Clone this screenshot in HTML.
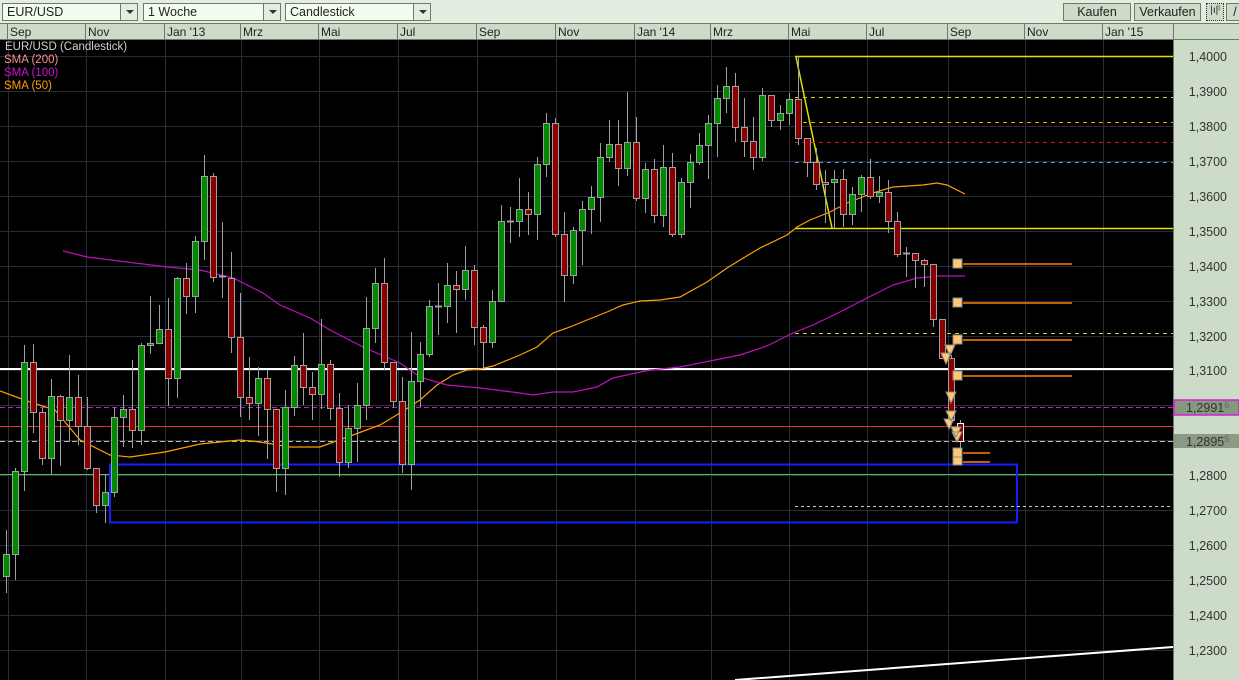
<!DOCTYPE html>
<html><head><meta charset="utf-8">
<style>
*{margin:0;padding:0;box-sizing:border-box}
body{width:1239px;height:680px;overflow:hidden;background:#e4eee0;font-family:"Liberation Sans",sans-serif;position:relative}
.dd{position:absolute;top:3px;height:18px;background:#f2fdf0;border:1px solid #6f7a6b;font-size:12.5px;color:#222;padding:1px 0 0 4px}
.dd .ar{position:absolute;right:0;top:0;width:17px;height:16px;border-left:1px solid #6f7a6b;background:#e4eee0}
.dd .ar:after{content:"";position:absolute;left:5px;top:6px;border-left:4px solid transparent;border-right:4px solid transparent;border-top:4px solid #333}
.btn{position:absolute;top:3px;height:18px;background:#cddcc8;border:1px solid #6f7a6b;font-size:12.5px;color:#222;text-align:center;padding-top:1px}
</style></head><body>
<div class="dd" style="left:2px;width:136px">EUR/USD<div class="ar"></div></div>
<div class="dd" style="left:143px;width:138px">1 Woche<div class="ar"></div></div>
<div class="dd" style="left:285px;width:146px">Candlestick<div class="ar"></div></div>
<div class="btn" style="left:1063px;width:68px">Kaufen</div>
<div class="btn" style="left:1134px;width:67px">Verkaufen</div>
<div class="btn" style="left:1206px;width:18px;border:1px dotted #333;font-size:10px">|ı|ˡ</div>
<div class="btn" style="left:1226px;width:18px">/</div>
<svg id="s" width="1239" height="680" style="position:absolute;left:0;top:0" xmlns="http://www.w3.org/2000/svg" font-family="Liberation Sans, sans-serif">
<rect x="0" y="23" width="1239" height="17" fill="#cddcc8"/>
<line x1="0" y1="23.5" x2="1239" y2="23.5" stroke="#6f7a6b"/>
<line x1="0" y1="39.5" x2="1239" y2="39.5" stroke="#6f7a6b"/>
<rect x="0" y="40" width="1173" height="640" fill="#000"/>
<rect x="1173" y="40" width="66" height="640" fill="#cddcc8"/>
<line x1="1173.5" y1="23" x2="1173.5" y2="680" stroke="#6f7a6b"/>
<g id="grid" stroke="#262c3a" stroke-width="1"></g>
<g id="hdr" font-size="12" fill="#222"></g>
<g id="ax" font-size="12.5" fill="#333" text-anchor="end"></g>
<!-- horizontal levels -->
<line x1="0" y1="369" x2="1173" y2="369" stroke="#fff" stroke-width="2"/>
<line x1="0" y1="407.5" x2="1173" y2="407.5" stroke="#c020c0" stroke-dasharray="5,3"/>
<line x1="0" y1="426.5" x2="1173" y2="426.5" stroke="#e03030"/>
<line x1="0" y1="441.5" x2="1173" y2="441.5" stroke="#bbb" stroke-dasharray="5,3"/>
<line x1="0" y1="474.5" x2="1173" y2="474.5" stroke="#50c050"/>
<rect x="110" y="464.5" width="907" height="58" fill="none" stroke="#1020ff" stroke-width="2"/>
<line x1="795" y1="56.5" x2="1173" y2="56.5" stroke="#e0e000" stroke-width="1.5"/>
<line x1="795" y1="228.5" x2="1173" y2="228.5" stroke="#e0e000" stroke-width="1.5"/>
<line x1="796" y1="57" x2="832" y2="228" stroke="#e0e000" stroke-width="1.5"/>
<line x1="795" y1="97.5" x2="1173" y2="97.5" stroke="#d8d040" stroke-dasharray="4,4"/>
<line x1="795" y1="122.5" x2="1173" y2="122.5" stroke="#ff9900" stroke-dasharray="4,4"/>
<line x1="795" y1="142.5" x2="1173" y2="142.5" stroke="#e02020" stroke-dasharray="4,4"/>
<line x1="795" y1="162.5" x2="1173" y2="162.5" stroke="#6090e0" stroke-dasharray="4,4"/>
<line x1="795" y1="333.5" x2="1173" y2="333.5" stroke="#d8d040" stroke-dasharray="4,4"/>
<line x1="795" y1="506.5" x2="1173" y2="506.5" stroke="#ccc" stroke-dasharray="3,3"/>
<line x1="735" y1="680" x2="1173" y2="647" stroke="#fff" stroke-width="2"/>
<polyline fill="none" stroke="#ffa000" stroke-width="1.2" points="0,391 30,402 55,410 80,440 110,455 130,457 165,452 200,444 240,440 260,442 290,447 320,447 353,435 380,425 400,413 420,400 437,385 453,375 467,370 480,369 493,366 520,355 537,347 553,333 570,327 587,320 607,312 623,305 640,301 660,300 680,297 707,282 727,268 740,260 760,248 787,235 797,227 810,220 830,212 847,203 873,193 893,187 923,185 937,183 947,185 965,194"/>
<polyline fill="none" stroke="#c010c0" stroke-width="1.2" points="63,251 87,257 127,262 167,267 200,270 233,278 263,293 280,305 310,318 330,330 363,347 400,363 420,377 447,385 480,388 520,393 533,395 553,392 573,392 597,387 613,378 650,370 680,367 740,355 767,346 793,333 813,325 840,312 867,298 893,285 917,278 940,276 965,276"/>
<g id="c"></g>
<g stroke="#ff8000" stroke-width="1.5">
<line x1="963" y1="264" x2="1072" y2="264"/><line x1="963" y1="303" x2="1072" y2="303"/>
<line x1="963" y1="340" x2="1072" y2="340"/><line x1="963" y1="376" x2="1072" y2="376"/>
<line x1="963" y1="453" x2="990" y2="453"/><line x1="963" y1="462" x2="990" y2="462"/>
</g>
<g fill="#ffc878" stroke="#888">
<rect x="953" y="259" width="9" height="9"/><rect x="953" y="298" width="9" height="9"/>
<rect x="953" y="335" width="9" height="9"/><rect x="953" y="371" width="9" height="9"/>
<rect x="953" y="448" width="9" height="9"/><rect x="953" y="457" width="9" height="8"/>
<path d="M945,345h10l-5,11z M941,353h10l-5,11z M946,392h10l-5,11z M946,411h10l-5,10z M944,419h10l-5,10z M951,427h10l-5,10z M952,432h10l-5,10z"/>
</g>
<rect x="1174" y="400" width="65" height="15" fill="#879880" stroke="#d020d0" stroke-width="1.5"/>
<text x="1186" y="412" font-size="12.5" fill="#333">1,2991<tspan font-size="9" fill="#666" dy="-4">6</tspan></text>
<rect x="1174" y="434" width="65" height="14" fill="#8a9a85"/>
<text x="1186" y="446" font-size="12.5" fill="#333">1,2895<tspan font-size="9" fill="#666" dy="-4">5</tspan></text>
<text x="5" y="50" font-size="11.5" fill="#d0d0d0">EUR/USD (Candlestick)</text>
<text x="4" y="63" font-size="11.5" fill="#ff9090">SMA (200)</text>
<text x="4" y="76" font-size="11.5" fill="#d010d0">SMA (100)</text>
<text x="4" y="89" font-size="11.5" fill="#ffa000">SMA (50)</text>
</svg>
<script>
var NS="http://www.w3.org/2000/svg";
function el(p,t,a,txt){var e=document.createElementNS(NS,t);for(var k in a)e.setAttribute(k,a[k]);if(txt)e.textContent=txt;document.getElementById(p).appendChild(e);return e;}
var gx=[8,86,165,241,319,398,477,556,635,711,789,867,948,1025,1103];
var lb=["Sep","Nov","Jan '13","Mrz","Mai","Jul","Sep","Nov","Jan '14","Mrz","Mai","Jul","Sep","Nov","Jan '15"];
gx.forEach(function(x,i){el("grid","line",{x1:x+.5,y1:40,x2:x+.5,y2:680});el("hdr","line",{x1:x-.5,y1:24,x2:x-.5,y2:40,stroke:"#6f7a6b"});el("hdr","text",{x:x+2,y:36},lb[i]);});
for(var k=0;k<=17;k++){var y=Math.round(56+k*34.94);el("grid","line",{x1:0,y1:y+.5,x2:1173,y2:y+.5});var p=(1.4-k*0.01).toFixed(4).replace(".",",");if(y<398||y>450)el("ax","text",{x:1227,y:y+5},p);}
var D=[[576,554,530,593],[554,471,468,580],[471,362,345,491],[362,412,344,433],[412,458,408,465],[458,396,379,474],[396,420,395,466],[420,397,355,442],[397,426,375,445],[426,468,397,470],[468,505,468,513],[505,492,475,523],[492,417,407,497],[417,409,395,447],[409,430,360,448],[430,345,343,445],[345,343,296,354],[343,329,305,343],[329,378,298,406],[378,278,277,398],[278,296,263,314],[296,241,236,313],[241,176,155,260],[176,277,173,282],[277,276,222,298],[278,337,252,353],[337,397,293,417],[397,403,357,420],[403,378,367,436],[378,409,370,459],[409,468,409,492],[468,407,390,495],[407,365,356,416],[365,387,333,405],[387,394,372,420],[394,364,319,409],[364,408,360,420],[408,462,393,477],[462,428,405,468],[428,405,383,462],[405,328,297,420],[328,283,268,343],[283,362,258,370],[362,401,362,408],[401,464,377,473],[464,381,332,490],[381,354,342,407],[354,306,300,357],[306,306,283,335],[306,285,263,323],[285,289,271,333],[289,270,246,300],[270,327,265,345],[327,342,325,368],[342,301,290,348],[301,221,205,301],[221,221,207,243],[221,209,178,237],[209,214,192,235],[214,164,157,240],[164,123,113,177],[123,234,118,237],[234,275,212,302],[275,230,227,284],[230,209,201,265],[209,197,186,234],[197,157,143,222],[157,144,120,162],[144,168,120,186],[168,142,92,176],[142,198,117,201],[198,169,163,213],[169,215,159,223],[215,167,145,227],[167,234,153,237],[234,182,178,238],[182,162,154,208],[162,145,133,165],[145,123,115,179],[123,98,85,157],[98,86,67,113],[86,127,73,142],[127,141,98,157],[141,157,117,170],[157,95,88,161],[95,120,95,127],[120,113,105,130],[113,99,93,125],[99,138,57,145],[138,162,138,177],[162,184,148,190],[182,184,170,223],[182,179,170,228],[179,214,169,227],[214,194,187,225],[194,177,175,212],[177,196,159,199],[196,192,176,203],[192,221,180,233],[221,254,212,257],[253,253,247,277],[253,260,253,288],[260,264,259,287],[264,319,264,327],[319,358,319,358],[358,420,355,425],[423,441,420,452]];
D.forEach(function(d,i){var c=6+9*i,o=d[0],cl=d[1],t=Math.min(o,cl),b=Math.max(o,cl);
el("c","line",{x1:c+.5,y1:d[2],x2:c+.5,y2:d[3],stroke:"#a0a0a0"});
if(b-t<2){el("c","line",{x1:c-3,y1:t+.5,x2:c+4,y2:t+.5,stroke:"#a0a0a0",'stroke-width':2});}
else el("c","rect",{x:c-2.5,y:t+.5,width:6,height:b-t,fill:cl<o?"#008a00":"#8a0000",stroke:i==106?"#fff":"#a0a0a0"});});
</script>
</body></html>
